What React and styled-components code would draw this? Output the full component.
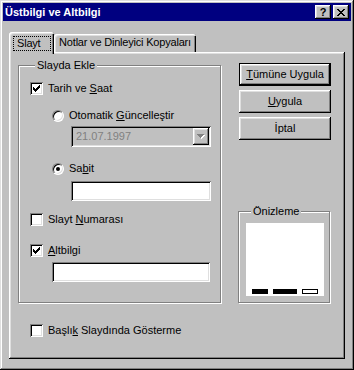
import React from 'react';
import styled, { createGlobalStyle } from 'styled-components';

const GlobalStyle = createGlobalStyle`
  html, body {
    margin: 0;
    padding: 0;
    background: #c0c0c0;
  }
  body {
    font-family: "Liberation Sans", Arial, sans-serif;
    font-size: 11px;
    color: #000;
  }
`;

const raised = `
  box-shadow: inset -1px -1px #000, inset 1px 1px #fff, inset -2px -2px #808080, inset 2px 2px #dfdfdf;
`;

const sunken = `
  box-shadow: inset 1px 1px #808080, inset -1px -1px #fff, inset 2px 2px #000, inset -2px -2px #dfdfdf;
`;

const Window = styled.div`
  width: 354px;
  height: 370px;
  box-sizing: border-box;
  padding: 3px;
  background: #c0c0c0;
  box-shadow: inset -1px -1px #000, inset 1px 1px #dfdfdf, inset -2px -2px #808080, inset 2px 2px #fff;
  display: flex;
  flex-direction: column;
  font-family: "Liberation Sans", Arial, sans-serif;
  font-size: 11px;
`;

const TitleBar = styled.div`
  height: 18px;
  flex-shrink: 0;
  background: #000080;
  display: flex;
  align-items: center;
  padding: 0 2px;
`;

const TitleText = styled.div`
  flex: 1;
  color: #fff;
  font-weight: bold;
  font-size: 11px;
  line-height: 13px;
`;

const TitleButton = styled.div`
  width: 16px;
  height: 14px;
  background: #c0c0c0;
  ${raised}
  display: flex;
  align-items: center;
  justify-content: center;
  margin-left: ${(p) => p.$gap || 0}px;
  font-weight: bold;
  font-size: 11px;
  line-height: 11px;
`;

const Body = styled.div`
  flex: 1;
  display: flex;
  flex-direction: column;
  padding: 11px 6px 8px 6px;
`;

const TabStrip = styled.div`
  display: flex;
  align-items: flex-end;
  height: 20px;
  flex-shrink: 0;
`;

const Tab = styled.div`
  position: relative;
  z-index: ${(p) => (p.$active ? 1 : 0)};
  box-sizing: border-box;
  width: ${(p) => p.$width}px;
  height: ${(p) => (p.$active ? 22 : 18)}px;
  margin-bottom: ${(p) => (p.$active ? -2 : 0)}px;
  padding: ${(p) => (p.$active ? '4px 0 0 4px' : '2px 0 0 0')};
  background: #c0c0c0;
  border-radius: 3px 3px 0 0;
  box-shadow: inset 1px 1px #fff, inset 2px 2px #dfdfdf, inset -1px 0 #000, inset -2px 0 #808080;
  display: flex;
  justify-content: ${(p) => (p.$active ? 'flex-start' : 'center')};
  align-items: flex-start;
  line-height: 13px;
  letter-spacing: -0.2px;
  white-space: nowrap;
`;

const FocusLabel = styled.span`
  border: 1px dotted #000;
  padding: 0 10px 0 3px;
  line-height: 13px;
`;

const Panel = styled.div`
  flex: 1;
  background: #c0c0c0;
  ${raised}
  padding: 7px 14px 0 9px;
  display: flex;
  flex-direction: column;
`;

const Columns = styled.div`
  display: flex;
  align-items: stretch;
  gap: 17px;
`;

const Group = styled.fieldset`
  box-sizing: border-box;
  min-width: 0;
  width: ${(p) => p.$width}px;
  margin: 0;
  padding: ${(p) => p.$padding};
  border: 1px solid #808080;
  box-shadow: inset 1px 1px #fff, 1px 1px #fff;
  display: flex;
  flex-direction: column;
  align-items: flex-start;
`;

const Legend = styled.legend`
  margin-left: 5px;
  padding: 0 2px;
  line-height: 13px;
  background: #c0c0c0;
`;

const Row = styled.div`
  display: flex;
  align-items: center;
  height: 13px;
  margin-top: ${(p) => p.$top || 0}px;
  margin-left: ${(p) => p.$left || 0}px;
  white-space: nowrap;
`;

const CheckBox = styled.span`
  width: 13px;
  height: 13px;
  flex-shrink: 0;
  background: #fff;
  ${sunken}
  display: block;
`;

const Radio = styled.span`
  width: 12px;
  height: 12px;
  box-sizing: border-box;
  flex-shrink: 0;
  border-radius: 50%;
  background: #fff;
  border: 1px solid;
  border-color: #808080 #fff #fff #808080;
  box-shadow: inset 1px 1px #000, inset -1px -1px #dfdfdf;
  display: flex;
  align-items: center;
  justify-content: center;
`;

const RadioDot = styled.span`
  width: 4px;
  height: 4px;
  border-radius: 50%;
  background: #000;
`;

const Label = styled.span`
  margin-left: 5px;
  line-height: 13px;
`;

const Key = styled.span`
  text-decoration: underline;
  text-underline-offset: 1px;
`;

const Combo = styled.div`
  box-sizing: border-box;
  width: 140px;
  height: 21px;
  margin-top: ${(p) => p.$top}px;
  margin-left: 41px;
  padding: 2px 2px 2px 5px;
  background: #c0c0c0;
  ${sunken}
  display: flex;
  align-items: center;
  color: #808080;
`;

const ComboText = styled.span`
  flex: 1;
  line-height: 13px;
`;

const DropButton = styled.span`
  width: 16px;
  height: 17px;
  background: #c0c0c0;
  ${raised}
  display: flex;
  align-items: center;
  justify-content: center;
`;

const TextBox = styled.div`
  box-sizing: border-box;
  width: ${(p) => p.$width}px;
  height: 20px;
  margin-top: ${(p) => p.$top}px;
  margin-left: ${(p) => p.$left}px;
  background: #fff;
  ${sunken}
`;

const SideColumn = styled.div`
  width: 93px;
  padding-top: 4px;
  display: flex;
  flex-direction: column;
  align-items: flex-end;
  gap: 4px;
`;

const Button = styled.div`
  box-sizing: border-box;
  width: 92px;
  height: 23px;
  background: #c0c0c0;
  display: flex;
  align-items: center;
  justify-content: center;
  line-height: 13px;
  ${(p) =>
    p.$default
      ? `border: 1px solid #000;
         box-shadow: inset -1px -1px #000, inset 1px 1px #fff, inset -2px -2px #808080, inset 2px 2px #dfdfdf;`
      : raised}
`;

const PreviewGroup = styled(Group)`
  margin-top: auto;
  align-self: flex-start;
`;

const PreviewBox = styled.div`
  width: 78px;
  height: 73px;
  box-sizing: border-box;
  background: #fff;
  display: flex;
  align-items: flex-end;
  gap: 5px;
  padding: 0 6px 2px 6px;
`;

const Bar = styled.span`
  width: ${(p) => p.$width}px;
  height: 5px;
  box-sizing: border-box;
  background: ${(p) => (p.$hollow ? '#fff' : '#000')};
  border: 1px solid #000;
`;

const CheckMark = () => (
  <svg width="13" height="13" viewBox="0 0 13 13" shapeRendering="crispEdges">
    <path
      d="M9 3h1v1h-1z M8 4h2v1h-2z M3 5h1v1h-1z M7 5h3v1h-3z M3 6h2v1h-2z M6 6h3v1h-3z M3 7h5v1h-5z M4 8h3v1h-3z M5 9h1v1h-1z"
      fill="#000"
    />
  </svg>
);

const CloseGlyph = () => (
  <svg width="8" height="7" viewBox="0 0 8 7" shapeRendering="crispEdges">
    <path
      d="M0 0h2v1h-2z M6 0h2v1h-2z M1 1h2v1h-2z M5 1h2v1h-2z M2 2h4v1h-4z M3 3h2v1h-2z M2 4h4v1h-4z M1 5h2v1h-2z M5 5h2v1h-2z M0 6h2v1h-2z M6 6h2v1h-2z"
      fill="#000"
    />
  </svg>
);

const DownArrow = () => (
  <svg width="8" height="5" viewBox="0 0 8 5" shapeRendering="crispEdges">
    <path d="M1 1h7v1h-7z M2 2h5v1h-5z M3 3h3v1h-3z M4 4h1v1h-1z" fill="#fff" />
    <path d="M0 0h7v1h-7z M1 1h5v1h-5z M2 2h3v1h-3z M3 3h1v1h-1z" fill="#808080" />
  </svg>
);

const Check = ({ checked, children, top, left }) => (
  <Row $top={top} $left={left}>
    <CheckBox>{checked && <CheckMark />}</CheckBox>
    <Label>{children}</Label>
  </Row>
);

const Option = ({ selected, children, top }) => (
  <Row $top={top} $left={22}>
    <Radio>{selected && <RadioDot />}</Radio>
    <Label>{children}</Label>
  </Row>
);

export default function App() {
  return (
    <>
      <GlobalStyle />
      <Window>
        <TitleBar>
          <TitleText>Üstbilgi ve Altbilgi</TitleText>
          <TitleButton>?</TitleButton>
          <TitleButton $gap={2}>
            <CloseGlyph />
          </TitleButton>
        </TitleBar>
        <Body>
          <TabStrip>
            <Tab $active $width={45}>
              <FocusLabel>Slayt</FocusLabel>
            </Tab>
            <Tab $width={142}>Notlar ve Dinleyici Kopyaları</Tab>
          </TabStrip>
          <Panel>
            <Columns>
              <Group $width={203} $padding="10px 0 20px 11px">
                <Legend>Slayda Ekle</Legend>
                <Check checked>
                  Tarih ve <Key>S</Key>aat
                </Check>
                <Option top={14}>
                  Otomatik <Key>G</Key>üncelleştir
                </Option>
                <Combo $top={4}>
                  <ComboText>21.07.1997</ComboText>
                  <DropButton>
                    <DownArrow />
                  </DropButton>
                </Combo>
                <Option selected top={15}>
                  Sa<Key>b</Key>it
                </Option>
                <TextBox $width={140} $top={6} $left={41} />
                <Check top={12}>
                  Slayt <Key>N</Key>umarası
                </Check>
                <Check checked top={18}>
                  <Key>A</Key>ltbilgi
                </Check>
                <TextBox $width={158} $top={5} $left={22} />
              </Group>
              <SideColumn>
                <Button $default>
                  <span>
                    <Key>T</Key>ümüne Uygula
                  </span>
                </Button>
                <Button>
                  <span>
                    <Key>U</Key>ygula
                  </span>
                </Button>
                <Button>İptal</Button>
                <PreviewGroup $width={92} $padding="5px 0 6px 7px">
                  <Legend>Önizleme</Legend>
                  <PreviewBox>
                    <Bar $width={16} />
                    <Bar $width={24} />
                    <Bar $width={16} $hollow />
                  </PreviewBox>
                </PreviewGroup>
              </SideColumn>
            </Columns>
            <Check top={21} left={12}>
              Başlı<Key>k</Key> Slaydında Gösterme
            </Check>
          </Panel>
        </Body>
      </Window>
    </>
  );
}
